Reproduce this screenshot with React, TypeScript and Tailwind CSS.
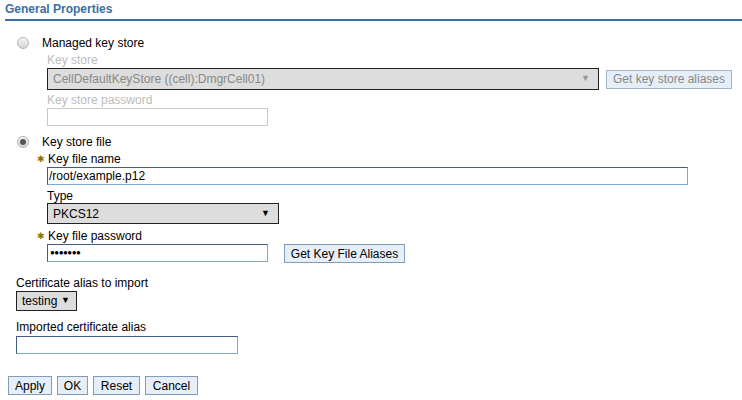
import React from 'react';

function Radio({ checked }: { checked?: boolean }) {
  return (
    <span className="w-[12px] h-[12px] rounded-full border border-[#b5b5b5] bg-gradient-to-b from-[#f4f4f4] to-[#d6d6d6] flex items-center justify-center shrink-0">
      {checked && <span className="w-[6px] h-[6px] rounded-full bg-[#555]" />}
    </span>
  );
}

function Req() {
  return <span className="w-[11px] -ml-[10px] text-[9px] leading-[14px] text-[#8a7300]">✱</span>;
}

function Select({ value, width, disabled }: { value: string; width: string; disabled?: boolean }) {
  return (
    <div className={`${width} flex items-center justify-between border border-[#222] bg-[#dddddd] pl-[5px] pr-[8px] ${disabled ? 'text-[#888] h-[22px]' : 'text-black h-[21px]'} text-[12px]`}>
      <span>{value}</span>
      <span className={`text-[9px] ${disabled ? 'text-[#999]' : 'text-black'}`}>▼</span>
    </div>
  );
}

function Btn({ children, disabled, width }: { children: React.ReactNode; disabled?: boolean; width: string }) {
  return (
    <button className={`${width} h-[19px] border border-[#7f9db9] bg-[#e6eef7] text-[12px] leading-[16px] text-center ${disabled ? 'text-[#888] border-[#9fb6cc]' : 'text-black'}`}>
      {children}
    </button>
  );
}

export default function App() {
  return (
    <div className="w-[742px] h-[400px] bg-white text-[12px] text-black overflow-hidden" style={{ fontFamily: '"Liberation Sans", Arial, sans-serif' }}>
      {/* Header */}
      <div className="ml-[5px] h-[21px] border-b-2 border-[#3a6ea5] pt-[2px]">
        <h2 className="font-bold text-[12px] leading-[15px] text-[#3a6ea5]">General Properties</h2>
      </div>

      <div className="mt-[14px] pl-[17px] flex items-center gap-[13px] h-[16px]">
        <Radio />
        <span>Managed key store</span>
      </div>

      <div className="ml-[47px]">
        <div className="mt-[2px] leading-[14px] text-[#bbbbbb]">Key store</div>
        <div className="mt-[1px] flex items-center gap-[7px]">
          <Select value="CellDefaultKeyStore ((cell):DmgrCell01)" width="w-[552px]" disabled />
          <Btn disabled width="w-[126px]">Get key store aliases</Btn>
        </div>
        <div className="mt-[3px] leading-[14px] text-[#bbbbbb]">Key store password</div>
        <div className="mt-[1px] w-[221px] h-[18px] border border-[#c8c8c8]" />
      </div>

      <div className="mt-[8px] pl-[17px] flex items-center gap-[13px] h-[16px]">
        <Radio checked />
        <span>Key store file</span>
      </div>

      <div className="ml-[47px]">
        <div className="mt-[2px] leading-[14px] flex"><Req />Key file name</div>
        <div className="mt-[1px] w-[641px] h-[18px] border border-[#7fa8cc] border-t-[#3e5f82] border-l-[#3e5f82] pl-[1px] leading-[16px]">/root/example.p12</div>
        <div className="mt-[4px] leading-[14px]">Type</div>
        <Select value="PKCS12" width="w-[232px]" />
        <div className="mt-[5px] leading-[14px] flex"><Req />Key file password</div>
        <div className="mt-[1px] flex items-start gap-[16px]">
          <div className="w-[221px] h-[18px] border border-[#7fa8cc] border-t-[#3e5f82] border-l-[#3e5f82] pl-[2px] leading-[15px] text-[8px] font-bold tracking-[-0.5px]">●●●●●●●</div>
          <Btn width="w-[121px]">Get Key File Aliases</Btn>
        </div>
      </div>

      <div className="ml-[16px]">
        <div className="mt-[13px] leading-[14px]">Certificate alias to import</div>
        <div className="mt-[1px]">
          <Select value="testing" width="w-[61px] !h-[20px] !pr-[6px]" />
        </div>
        <div className="mt-[9px] leading-[14px]">Imported certificate alias</div>
        <div className="mt-[2px] w-[222px] h-[18px] border border-[#7fa8cc] border-t-[#3e5f82] border-l-[#3e5f82]" />
      </div>

      <div className="mt-[22px] ml-[8px] flex gap-[5px]">
        <Btn width="w-[44px]">Apply</Btn>
        <Btn width="w-[31px]">OK</Btn>
        <Btn width="w-[47px]">Reset</Btn>
        <Btn width="w-[53px]">Cancel</Btn>
      </div>
    </div>
  );
}
